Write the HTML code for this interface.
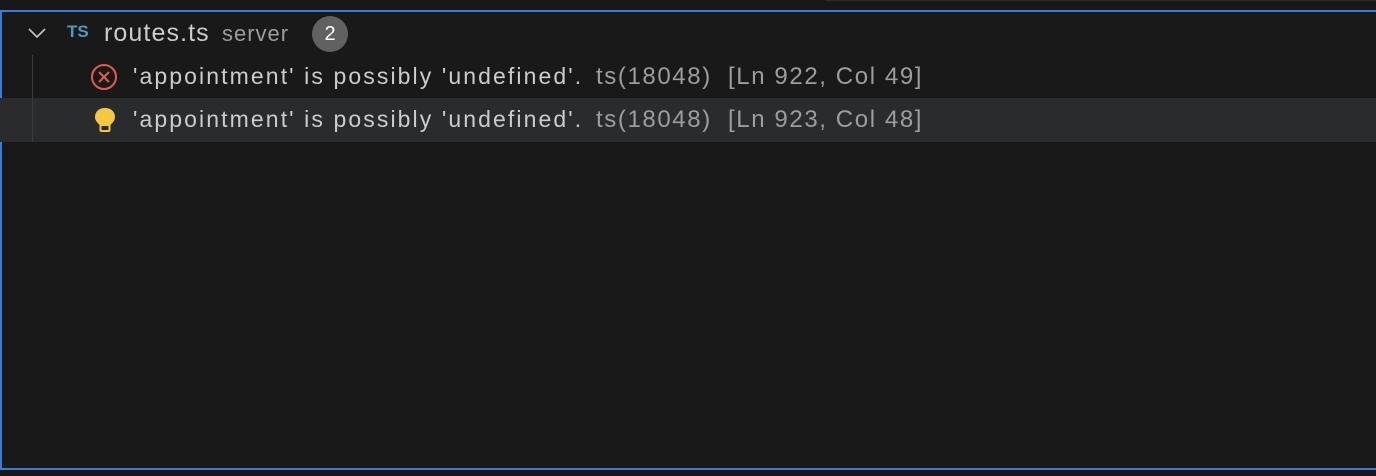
<!DOCTYPE html>
<html><head><style>
body{margin:0;width:1376px;height:476px;background:#181818;overflow:hidden;font-family:"Liberation Sans",sans-serif;position:relative}
.top{position:absolute;left:825px;top:0;width:551px;height:1px;background:#2b2b2b}
.panel{position:absolute;left:0;top:10px;width:1376px;height:460px;border-top:2px solid #3a7bd5;border-left:2px solid #3a7bd5;border-bottom:2px solid #3a7bd5;box-sizing:border-box;background:#191919}
.row{position:absolute;left:0;width:1376px;height:44px;white-space:nowrap}
.msg{color:#cccccc;font-size:23px;letter-spacing:2.1px}
.dim{color:#9d9d9d;font-size:24px;letter-spacing:1.6px}
.guide{position:absolute;left:32px;top:55px;width:1px;height:87px;background:#3b3b3b}
</style></head><body>
<div class="top"></div>
<div class="panel"></div>
<div class="row" style="top:12px">
 <svg style="position:absolute;left:28px;top:15px" width="18" height="12"><path d="M1 2 L9 10 L17 2" stroke="#c5c5c5" stroke-width="1.6" fill="none"/></svg>
 <span style="position:absolute;left:67px;top:10px;color:#519aba;font-weight:bold;font-size:17px">TS</span>
 <span style="position:absolute;left:104px;top:7px;color:#cccccc;font-size:25px;letter-spacing:1.1px">routes.ts</span>
 <span style="position:absolute;left:222px;top:9px;color:#9d9d9d;font-size:22px;letter-spacing:1px">server</span>
 <span style="position:absolute;left:312px;top:4px;width:36px;height:36px;border-radius:18px;background:#616161;color:#fff;font-size:20px;text-align:center;line-height:36px">2</span>
</div>
<div class="guide"></div>
<div class="row" style="top:55px">
 <svg style="position:absolute;left:90px;top:8px" width="28" height="28"><circle cx="14" cy="14" r="12" stroke="#e25c52" stroke-width="2" fill="none"/><path d="M9 9 L19 19 M19 9 L9 19" stroke="#e25c52" stroke-width="2"/></svg>
 <span class="msg" style="position:absolute;left:133px;top:8px">'appointment' is possibly 'undefined'.</span>
 <span class="dim" style="position:absolute;left:596px;top:8px">ts(18048)</span>
 <span class="dim" style="position:absolute;left:728px;top:8px">[Ln 922, Col 49]</span>
</div>
<div class="row" style="top:98px;background:#2a2b2d">
 <div class="guide" style="top:0;height:44px"></div>
 <svg style="position:absolute;left:94px;top:9px" width="22" height="26"><path d="M11 1 C4.5 1 1 5 1 10 C1 14 4 16 5.5 18 L16.5 18 C18 16 21 14 21 10 C21 5 17.5 1 11 1Z" fill="#f5c842"/><rect x="6.5" y="18" width="9" height="6" rx="1" fill="none" stroke="#f5c842" stroke-width="2"/><rect x="9" y="19" width="4" height="4" fill="#2a2b2d"/></svg>
 <span class="msg" style="position:absolute;left:133px;top:8px">'appointment' is possibly 'undefined'.</span>
 <span class="dim" style="position:absolute;left:596px;top:8px">ts(18048)</span>
 <span class="dim" style="position:absolute;left:728px;top:8px">[Ln 923, Col 48]</span>
</div>
</body></html>
